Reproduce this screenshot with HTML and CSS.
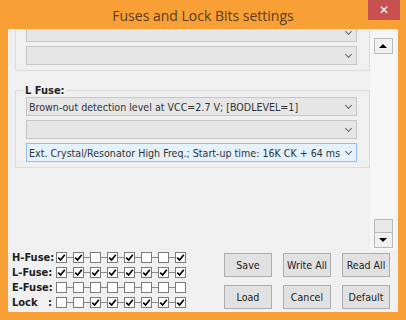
FILE: index.html
```html
<!DOCTYPE html>
<html lang="en">
<head>
    <meta charset="UTF-8">
    <title>Fuses and Lock Bits settings</title>
    <link rel="stylesheet" href="styles.css">
</head>
<body>
    <div class="window">
        <div class="titlebar">
            <span class="title">Fuses and Lock Bits settings</span>
            <button class="close">&#x2715;</button>
        </div>
        <div class="client">
            <div class="scroller">
                <div class="viewport">
                    <div class="fuses">
                        <fieldset class="group scrolled">
                            <div class="combos">
                                <div class="combo"><span class="combo-text"></span><span class="chev"></span></div>
                                <div class="combo"><span class="combo-text"></span><span class="chev"></span></div>
                            </div>
                        </fieldset>
                        <fieldset class="group">
                            <legend>L Fuse:</legend>
                            <div class="combos">
                                <div class="combo"><span class="combo-text">Brown-out detection level at VCC=2.7 V; [BODLEVEL=1]</span><span class="chev"></span></div>
                                <div class="combo"><span class="combo-text"></span><span class="chev"></span></div>
                                <div class="combo focused"><span class="combo-text">Ext. Crystal/Resonator High Freq.; Start-up time: 16K CK + 64 ms</span><span class="chev"></span></div>
                            </div>
                        </fieldset>
                    </div>
                </div>
                <div class="vscroll">
                    <span class="sb-btn up"></span>
                    <div class="sb-end">
                        <span class="sb-thumb"></span>
                        <span class="sb-btn down"></span>
                    </div>
                </div>
            </div>

            <div class="bottom">
                <div class="bits-table">
                    <span class="bits-label">H-Fuse:</span>
                    <div class="bits">
                        <span class="cb on"></span><span class="cb on"></span><span class="cb"></span><span class="cb on"></span>
                        <span class="cb on"></span><span class="cb"></span><span class="cb"></span><span class="cb on"></span>
                    </div>
                    <span class="bits-label">L-Fuse:</span>
                    <div class="bits">
                        <span class="cb on"></span><span class="cb on"></span><span class="cb on"></span><span class="cb on"></span>
                        <span class="cb on"></span><span class="cb on"></span><span class="cb on"></span><span class="cb on"></span>
                    </div>
                    <span class="bits-label">E-Fuse:</span>
                    <div class="bits">
                        <span class="cb"></span><span class="cb"></span><span class="cb"></span><span class="cb"></span>
                        <span class="cb"></span><span class="cb"></span><span class="cb"></span><span class="cb"></span>
                    </div>
                    <span class="bits-label">Lock&nbsp;&nbsp;&nbsp;:</span>
                    <div class="bits">
                        <span class="cb"></span><span class="cb"></span><span class="cb on"></span><span class="cb on"></span>
                        <span class="cb on"></span><span class="cb on"></span><span class="cb on"></span><span class="cb on"></span>
                    </div>
                </div>
                <div class="actions">
                    <button class="btn">Save</button>
                    <button class="btn">Write All</button>
                    <button class="btn">Read All</button>
                    <button class="btn">Load</button>
                    <button class="btn">Cancel</button>
                    <button class="btn">Default</button>
                </div>
            </div>
        </div>
    </div>
</body>
</html>
```

FILE: styles.css
```css
* {
    box-sizing: border-box;
}

body {
    margin: 0;
    background-color: #f8a036;
    font-family: 'DejaVu Sans Condensed', 'DejaVu Sans', sans-serif;
    font-size: 10.6px;
    color: #222;
}

.window {
    width: 406px;
    height: 320px;
    background-color: #f8a036;
    display: flex;
    flex-direction: column;
}

.titlebar {
    height: 29px;
    position: relative;
    display: flex;
    align-items: center;
    justify-content: center;
}

.title {
    font-family: 'Open Sans', sans-serif;
    font-size: 14px;
    color: #5a3d1f;
    margin-top: 1px;
}

.close {
    position: absolute;
    top: 0;
    right: 6px;
    width: 32px;
    height: 20px;
    border: none;
    padding: 0;
    background-color: #c75050;
    color: #fff;
    font-family: 'DejaVu Sans', sans-serif;
    font-size: 12px;
    font-weight: bold;
}

.client {
    margin: 0 8px;
    height: 283px;
    background-color: #f0f0f0;
    display: flex;
    flex-direction: column;
}

/* scrolling fuse panel */
.scroller {
    height: 221px;
    display: flex;
}

.viewport {
    flex: 1;
    overflow: hidden;
    padding-left: 7px;
}

.fuses {
    margin-top: -7px;
}

.group {
    width: 355px;
    margin: 0;
    padding: 0 12px 5px 10px;
    border: 1px solid #dcdcdc;
    min-width: 0;
}

.group.scrolled {
    padding-top: 0;
}

.group + .group {
    margin-top: 13px;
}

.group legend {
    font-weight: bold;
    font-size: 11px;
    line-height: 13px;
    padding: 0 1px;
    margin-left: -2px;
    color: #1e1e1e;
}

.combos {
    display: flex;
    flex-direction: column;
    gap: 4px;
}

.combo {
    height: 19px;
    border: 1px solid #c6c6c6;
    background-color: #e6e6e6;
    display: flex;
    align-items: center;
}

.combo.focused {
    background-color: #e5f1fb;
    border-color: #8fbfea;
}

.combo-text {
    flex: 1;
    overflow: hidden;
    white-space: nowrap;
    padding-left: 2px;
    color: #333;
}

.chev {
    width: 15px;
    height: 100%;
    display: flex;
    align-items: center;
    justify-content: center;
}

.chev::before {
    content: '';
    width: 4px;
    height: 4px;
    border-right: 1px solid #666;
    border-bottom: 1px solid #666;
    transform: rotate(45deg);
    margin-top: -3px;
}

.vscroll {
    width: 26px;
    margin-right: 2px;
    background-color: #f6f6f6;
    display: flex;
    flex-direction: column;
    justify-content: space-between;
    align-items: center;
    padding: 9px 0 2px;
}

.sb-end {
    display: flex;
    flex-direction: column;
}

.sb-btn, .sb-thumb {
    width: 19px;
    height: 16px;
    border: 1px solid #b9b9b9;
    background-color: #f0f0f0;
    display: flex;
    align-items: center;
    justify-content: center;
}

.sb-thumb {
    height: 13px;
    border-bottom: none;
    background-color: #e8e8e8;
}

.sb-btn::before {
    content: '';
    border-left: 4px solid transparent;
    border-right: 4px solid transparent;
}

.sb-btn.up::before {
    border-bottom: 4px solid #000;
}

.sb-btn.down::before {
    border-top: 4px solid #000;
}

/* fuse bits and buttons */
.bottom {
    flex: 1;
    display: flex;
    justify-content: space-between;
    align-items: flex-start;
    padding: 0 8px 0 4px;
}

.bits-table {
    display: grid;
    grid-template-columns: 44px auto;
    row-gap: 4px;
    padding-top: 2px;
}

.bits-label {
    font-weight: bold;
    font-size: 11px;
    line-height: 11px;
    color: #1e1e1e;
    white-space: nowrap;
}

.bits {
    display: flex;
    gap: 6px;
    background: linear-gradient(#8a8a8a, #8a8a8a) center / 100% 1px no-repeat;
}

.cb {
    width: 11px;
    height: 11px;
    border: 1px solid #7a7a7a;
    background-color: #fff;
}

.cb.on {
    background: #fff url("data:image/svg+xml,%3Csvg xmlns='http://www.w3.org/2000/svg' width='9' height='9'%3E%3Cpath d='M1.2 4.6 L3.6 7 L7.8 1.8' fill='none' stroke='%23000' stroke-width='1.7'/%3E%3C/svg%3E") center no-repeat;
}

.actions {
    display: grid;
    grid-template-columns: repeat(3, 48px);
    column-gap: 11px;
    row-gap: 8px;
    margin-top: 3px;
}

.btn {
    height: 24px;
    padding: 0;
    border: 1px solid #adadad;
    background-color: #e1e1e1;
    font-family: 'DejaVu Sans Condensed', 'DejaVu Sans', sans-serif;
    font-size: 10.6px;
    color: #222;
}
```
